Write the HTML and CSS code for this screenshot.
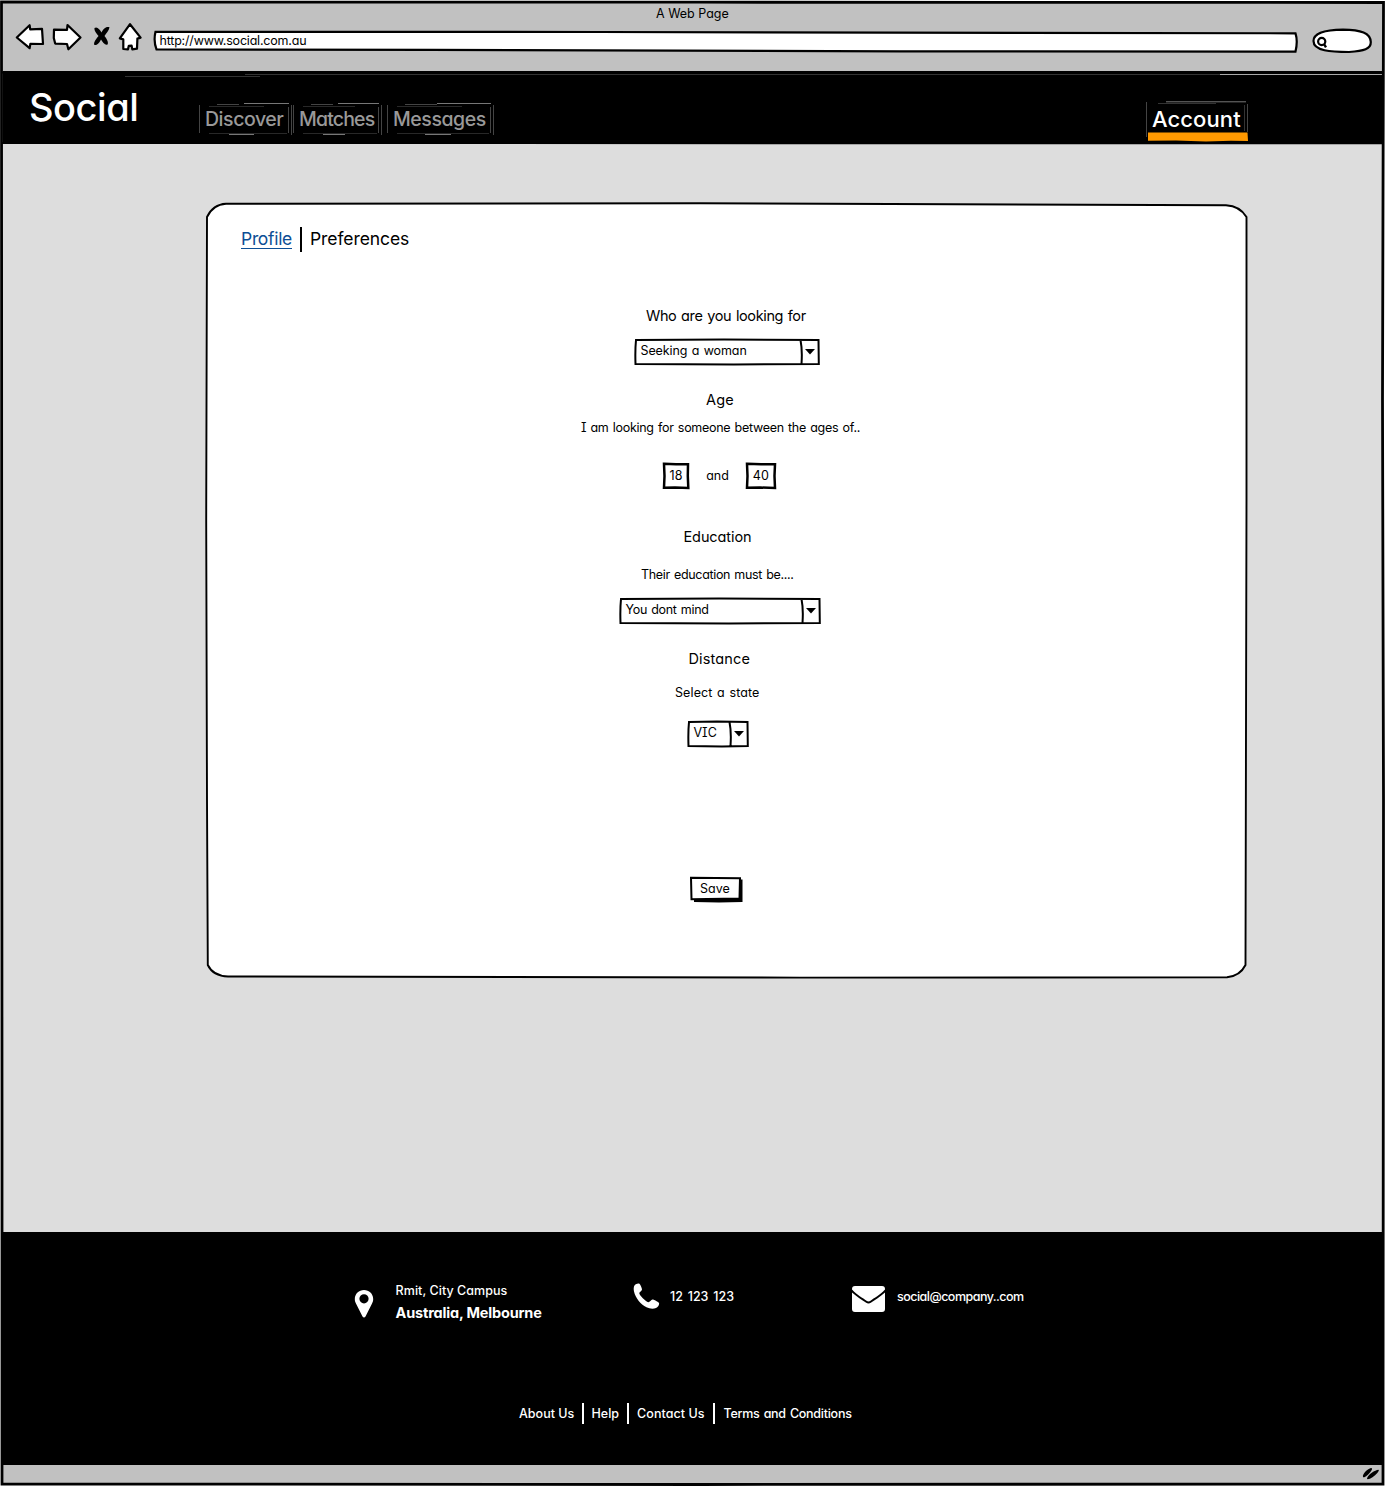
FILE: index.html
```html
<!DOCTYPE html>
<html lang="en">
<head>
<meta charset="utf-8">
<title>Social</title>
<link rel="stylesheet" href="styles.css">
</head>
<body>
<div class="window">
  <header class="toolbar">
    <div class="window-title">A Web Page</div>
    <div class="toolbar-row">
      <svg class="nav-icons" width="128" height="30" viewBox="15 22 128 30">
        <g fill="#fff" stroke="#000" stroke-width="2.2" stroke-linejoin="round">
          <path d="M16.8 37.5L29.6 25.2L30.2 29.4L42 28.8L43 44L30.4 43.8L29.6 48.2Z"/>
          <path d="M54 29.6L67 29.8L67.5 25L80.5 37.5L68.4 49.3L67 44L55.2 43.6L53.8 38Z"/>
          <path d="M130 24.2L140.6 37.6L137.4 38.6L137 48.6L132.3 49.3L131.6 45.6L128.8 45.8L128 49.3L123.3 49L123.3 39.4L119.8 38.4Z"/>
        </g>
        <path d="M94.5 28C97 26 100 29.500 101.500 32.500C103 29 106 26 109.500 27.200C109 30.500 106 33.500 104.500 36C106.500 38.500 109 42.500 107.500 44.500C105 45.500 102.500 42 101 39.500C99.500 42.500 97 46 94.200 44.800C93.500 42 96.500 38.500 98.500 36C96.500 33.500 94 30.500 94.500 28Z"/>
      </svg>
      <div class="address">
        <svg class="sketch" width="1145" height="24" viewBox="153 29 1145 24"><path d="M155.500 31.800L600 32L1295.500 33.300Q1298 41 1295.500 51.600L900 51.300L430 49.800L156.500 49.400Q153.300 41 155.500 31.800Z" fill="#fff" stroke="#000" stroke-width="2.2"/></svg>
        <span class="url">http://www.social.com.au</span>
      </div>
      <svg class="search" width="62" height="26" viewBox="1311 28 62 26">
        <path d="M1313.500 41C1313.500 33 1325 29.800 1343 29.600C1361 29.800 1370.500 33 1370.800 42C1371 49 1364 51 1349 52C1331 52 1313.500 51 1313.500 41Z" fill="#fff" stroke="#000" stroke-width="2.200"/>
        <circle cx="1321.700" cy="41.500" r="3.600" fill="none" stroke="#000" stroke-width="2.200"/><path d="M1324 44L1326 47.300" stroke="#000" stroke-width="2.400"/>
      </svg>
    </div>
  </header>

  <nav class="site-nav">
    <svg class="sketch" width="1379" height="73" viewBox="3 71 1379 73" fill="none"><path d="M1220 74.500H1382" stroke="#aaa"/><path d="M245 74.500H1220M125 76.500H260" stroke="#333"/></svg>
    <div class="brand">Social</div>
    <a class="tab discover">Discover<svg class="sketch" width="93" height="34" viewBox="0 0 93 34" fill="none"><path d="M18 1.500H40M.5 2V30M92.500 2V32M89.500 4V30" stroke="#444"/><path d="M45 .5H90M30 31.500H55" stroke="#777"/><path d="M10 3.500H65M10 30.500H88" stroke="#282828"/></svg></a>
    <a class="tab matches">Matches<svg class="sketch" width="89" height="34" viewBox="0 0 89 34" fill="none"><path d="M18 1.500H40M.5 2V30M88.500 2V32M85.500 4V30" stroke="#444"/><path d="M45 .5H86M30 31.500H52" stroke="#777"/><path d="M10 3.500H62M10 30.500H84" stroke="#282828"/></svg></a>
    <a class="tab messages">Messages<svg class="sketch" width="107" height="34" viewBox="0 0 107 34" fill="none"><path d="M18 1.500H50M.5 2V30M106.500 2V32M103.500 4V30" stroke="#444"/><path d="M50 .5H104M38 31.500H64" stroke="#777"/><path d="M10 3.500H75M10 30.500H102" stroke="#282828"/></svg></a>
    <a class="tab account">Account<svg class="sketch" width="103" height="41" viewBox="0 0 103 41" fill="none"><path d="M.5 1V36M101.500 3V31" stroke="#444"/><path d="M20 .8H100" stroke="#777"/><path d="M12 2.500H70M98.500 4V30" stroke="#333"/><path d="M2 31.500H101.500L102 40L85 39.800L60 40.500L30 39.500L2 39.800Z" fill="#ff9900"/></svg></a>
  </nav>

  <main class="content">
    <section class="card">
      <svg class="sketch" width="1043" height="777" viewBox="205 202 1043 777"><path d="M226 203.800L700 203.300L1226 205.200Q1240 206 1246.500 217L1246.500 500L1245.500 965Q1240 976 1227 977.300L800 977.600L228 976.500Q213 976 207.800 965L207 800L206.200 520L207 217Q213 204.500 226 203.800Z" fill="#fff" stroke="#000" stroke-width="1.900"/></svg>
      <div class="subnav"><a class="profile">Profile</a><i class="divider"></i><span class="preferences">Preferences</span></div>
      <form class="form">
        <h2 class="looking">Who are you looking for</h2>
        <div class="select gender"><svg class="sketch" width="186" height="28" viewBox="0 0 186 28" fill="none" stroke="#000" stroke-width="2"><path d="M2 2L90 1.500L184.500 2L184.800 26L100 26.500L1.500 26Q1 12 2 2ZM166.500 2Q168.500 12 167.500 26"/><path d="M171 11H181L176 16.500Z" fill="#000" stroke="none"/></svg>Seeking a woman</div>
        <h2 class="age">Age</h2>
        <p class="age-hint">I am looking for someone between the ages of..</p>
        <div class="ages">
          <div class="number low"><svg class="sketch" width="28" height="28" viewBox="0 0 28 28" fill="none" stroke="#000" stroke-width="2.500"><path d="M2 1.800L14 2.300L26 2.200L25.800 14L26.300 26L13 25.500L2 25.800L2.500 14Z"/></svg>18</div>
          <span class="and">and</span>
          <div class="number high"><svg class="sketch" width="32" height="28" viewBox="0 0 32 28" fill="none" stroke="#000" stroke-width="2.500"><path d="M2 1.800L16 2.300L30 2.200L29.500 14L30 26L15 25.500L2 25.800L2.500 14Z"/></svg>40</div>
        </div>
        <h2 class="education">Education</h2>
        <p class="education-hint">Their education must be....</p>
        <div class="select degree"><svg class="sketch" width="202" height="28" viewBox="0 0 202 28" fill="none" stroke="#000" stroke-width="2"><path d="M2 2L100 1.500L200.500 2L200.800 26L110 26.500L1.500 26Q1 12 2 2ZM182.500 2Q184.500 12 183.500 26"/><path d="M187 11H197L192 16.500Z" fill="#000" stroke="none"/></svg>You dont mind</div>
        <h2 class="distance">Distance</h2>
        <p class="state-hint">Select a state</p>
        <div class="select state"><svg class="sketch" width="62" height="28" viewBox="0 0 62 28" fill="none" stroke="#000" stroke-width="2"><path d="M2 2L30 1.500L60.500 2L60.800 26L35 26.500L1.500 26Q1 12 2 2ZM42.500 2Q44.500 12 43.500 26"/><path d="M47 11H57L52 16.500Z" fill="#000" stroke="none"/></svg>VIC</div>
        <div class="save"><svg class="sketch" width="54" height="27" viewBox="0 0 54 27"><path d="M5 4L53.500 3.500V26L30 26.500L5 26Z"/><path d="M2 1.800L51 2.300L50.500 22.500L2.500 23.300Z" fill="#fff" stroke="#000" stroke-width="2"/></svg><span>Save</span></div>
      </form>
    </section>
  </main>

  <footer class="footer">
    <div class="contacts">
      <svg class="pin" width="20" height="30" viewBox="0 0 20 30"><path fill-rule="evenodd" d="M10 1C15 1 19.200 4.800 19.200 10C19.200 12 18.600 13.500 17.800 15L11.500 27.500Q10 29.500 8.500 27.500L2.200 15C1.400 13.500.8 12 .8 10C.8 4.800 5 1 10 1ZM10 5.200A4.600 4.600 0 1 0 10 14.400A4.600 4.600 0 1 0 10 5.200Z" fill="#fff"/></svg>
      <div class="place"><span class="campus">Rmit, City Campus</span><strong class="city">Australia, Melbourne</strong></div>
      <svg class="phone" width="27" height="26" viewBox="0 0 27 26"><path d="M1 3.500C1.500 1.500 4 .3 6 .5C7 .7 9 5 9 6.500C9 8 6.300 9 6.300 10.300C6.500 12.500 12.500 18.500 15.300 19.200C16.800 19.300 18 16.700 19.500 16.500C21 16.500 25.500 19 26 20C26.500 21.500 25 24 23 25C20 26.300 16.500 25.700 13.500 24.300C7.500 21.300 2.500 15 1 8.500C.6 6.500.6 5 1 3.500Z" fill="#fff"/></svg>
      <span class="tel">12 123 123</span>
      <svg class="mail" width="33" height="26" viewBox="0 0 33 26"><path d="M3 0H30Q33 0 33 3V3.500C28 9 22 12 18.500 14.700Q16.500 16.200 14.500 14.700C11 12 5 9 0 3.500V3Q0 0 3 0ZM0 6.500C5 11 10 13.700 13.800 16.600Q16.500 18.500 19.200 16.600C23 13.700 28 11 33 6.500V23Q33 26 30 26H3Q0 26 0 23Z" fill="#fff"/></svg>
      <span class="email">social@company..com</span>
    </div>
    <div class="links">
      <a class="about">About Us</a><i></i><a class="help">Help</a><i></i><a class="contact">Contact Us</a><i></i><a class="terms">Terms and Conditions</a>
    </div>
  </footer>

  <div class="statusbar"><svg width="18" height="14" viewBox="0 0 18 14" fill="#000"><path d="M1 11C0 8 6 2.500 9 2C12 2 8 7 5 9.500C3.500 10.800 1.500 12 1 11ZM5 12.500C6 8.500 13 4 16.500 3.800C18 4.500 14 9 10.500 11.200C8 12.800 5 14 5 12.500Z"/></svg></div>

  <svg class="sketch frame" width="1385" height="1487" viewBox="0 0 1385 1487" fill="none" stroke="#000">
    <path d="M1.500 2L700 2.200L1383.500 2.500L1382.500 400L1383.500 800L1383 1484L700 1484.500L2 1484L2 1100L1.700 600Z" stroke-width="2.800"/>
    <path d="M2 72.500L1383 72.200M2 143L1383 143.300M2 1464H1383" stroke-width="2"/>
  </svg>
</div>
</body>
</html>
```
FILE: styles.css
```css
* { box-sizing: border-box; }
body {
  margin: 0;
  background: #fff;
  color: #000;
  font: 400 12.5px/20px Inter, sans-serif;
  font-feature-settings: "cv11", "cv08";
  white-space: nowrap;
}
h2, p { margin: 0; font-weight: 400; }
svg { display: block; flex: none; }
.window {
  position: relative;
  width: 1385px;
  height: 1487px;
  padding: 3px 3px 0;
  display: flex;
  flex-direction: column;
}
.sketch { position: absolute; left: 0; top: 0; z-index: -1; }
.frame { z-index: 2; pointer-events: none; }

.toolbar { height: 68px; background: #c1c1c1; }
.window-title { height: 16px; padding-left: 653px; line-height: 22px; }
.toolbar-row { display: flex; padding-left: 12px; }
.nav-icons { margin-top: 3px; }
.address {
  position: relative;
  z-index: 0;
  width: 1145px;
  height: 24px;
  margin: 10px 0 0 10px;
  padding: 2px 0 0 6.500px;
}
.url { letter-spacing: -.2px; }
.search { margin: 9px 0 0 13px; }

.site-nav {
  position: relative;
  z-index: 0;
  height: 73px;
  background: #000;
  color: #999;
  display: flex;
  align-items: flex-start;
  font-weight: 500;
}
.site-nav > .sketch { z-index: 0; }
.brand {
  width: 196px;
  padding: 12px 0 0 26px;
  color: #fff;
  font-size: 38px;
  line-height: 48px;
  letter-spacing: -.45px;
}
.tab {
  position: relative;
  z-index: 0;
  height: 34px;
  margin-top: 32px;
  padding-left: 6px;
  font-size: 19.5px;
  line-height: 33px;
}
.discover { width: 93px; letter-spacing: -.45px; }
.matches { width: 89px; margin-left: 1px; letter-spacing: -.85px; }
.messages { width: 107px; margin-left: 5px; letter-spacing: -.45px; }
.account {
  width: 103px;
  height: 41px;
  margin: 30px 0 0 652px;
  padding-left: 6px;
  color: #fff;
  font-size: 22px;
  line-height: 36px;
  letter-spacing: .1px;
}

.content { height: 1088px; padding: 58px 0 0 202px; background: #ddd; }
.card { position: relative; z-index: 0; width: 1043px; height: 777px; }
.subnav {
  height: 104px;
  padding: 24px 0 0 36px;
  display: flex;
  align-items: flex-start;
  font-size: 17.5px;
  line-height: 25px;
}
.profile {
  width: 51px;
  height: 23px;
  color: #0c4e95;
  border-bottom: 1px solid #0c4e95;
  letter-spacing: -.3px;
}
.divider { width: 2px; height: 25px; margin: 1px 8px 0; background: #000; }
.preferences { letter-spacing: -.08px; }

.form { display: flex; flex-direction: column; align-items: flex-start; }
.form h2 { font-size: 14.5px; line-height: 20px; }
.looking { margin-left: 441px; letter-spacing: -.38px; word-spacing: 1px; }
.select { position: relative; z-index: 0; height: 28px; padding-left: 7px; line-height: 26px; }
.gender { width: 186px; margin: 12px 0 0 428.500px; letter-spacing: -.1px; word-spacing: 1px; }
.age { margin: 24px 0 0 501px; letter-spacing: .15px; }
.age-hint { margin: 8px 0 0 376px; letter-spacing: -.28px; word-spacing: 1px; }
.ages { display: flex; margin: 24px 0 0 456.500px; line-height: 27px; }
.number { position: relative; z-index: 0; height: 28px; padding-left: 1px; text-align: center; }
.low { width: 28px; }
.and { width: 55px; padding-left: 1px; text-align: center; }
.high { width: 32px; letter-spacing: .3px; }
.education { margin: 37px 0 0 478.500px; letter-spacing: -.1px; }
.education-hint { margin: 18px 0 0 436px; letter-spacing: -.33px; word-spacing: 1px; }
.degree { width: 202px; margin: 12px 0 0 413.500px; letter-spacing: -.3px; word-spacing: 1px; }
.distance { margin: 24px 0 0 483.500px; letter-spacing: .15px; }
.state-hint { margin: 14px 0 0 470px; letter-spacing: .1px; word-spacing: 1px; }
.state { width: 62px; margin: 17px 0 0 481.500px; }
.save {
  position: relative;
  z-index: 0;
  width: 54px;
  height: 27px;
  margin: 128px 0 0 484px;
  padding-left: 11px;
  line-height: 25px;
}

.footer { height: 232px; background: #000; color: #fff; font-weight: 500; }
.contacts { height: 107px; padding: 48px 0 0 351px; display: flex; align-items: flex-start; }
.pin { margin-top: 9px; }
.place { width: 237px; margin-left: 21px; padding-left: .6px; display: flex; flex-direction: column; }
.campus { margin-top: 1px; letter-spacing: .05px; }
.city { margin-top: 2px; font-size: 14.5px; letter-spacing: -.18px; }
.phone { margin: 3px 0 0 1px; }
.tel { width: 183px; margin: 7px 0 0 10px; word-spacing: 1.500px; }
.mail { margin: 6px 0 0 -1px; }
.email { margin: 7px 0 0 12px; letter-spacing: -.52px; }
.links { padding: 64px 0 0 516px; display: flex; align-items: center; line-height: 20px; }
.links i { width: 2px; height: 21px; background: #fff; }
.about { width: 63px; }
.help { width: 43px; padding-left: 7.500px; }
.contact { width: 84px; padding-left: 8px; letter-spacing: .08px; }
.terms { padding-left: 8.500px; letter-spacing: -.26px; word-spacing: 1px; }

.statusbar { height: 19px; padding: 2px 2px; display: flex; justify-content: flex-end; background: #c1c1c1; }
```
